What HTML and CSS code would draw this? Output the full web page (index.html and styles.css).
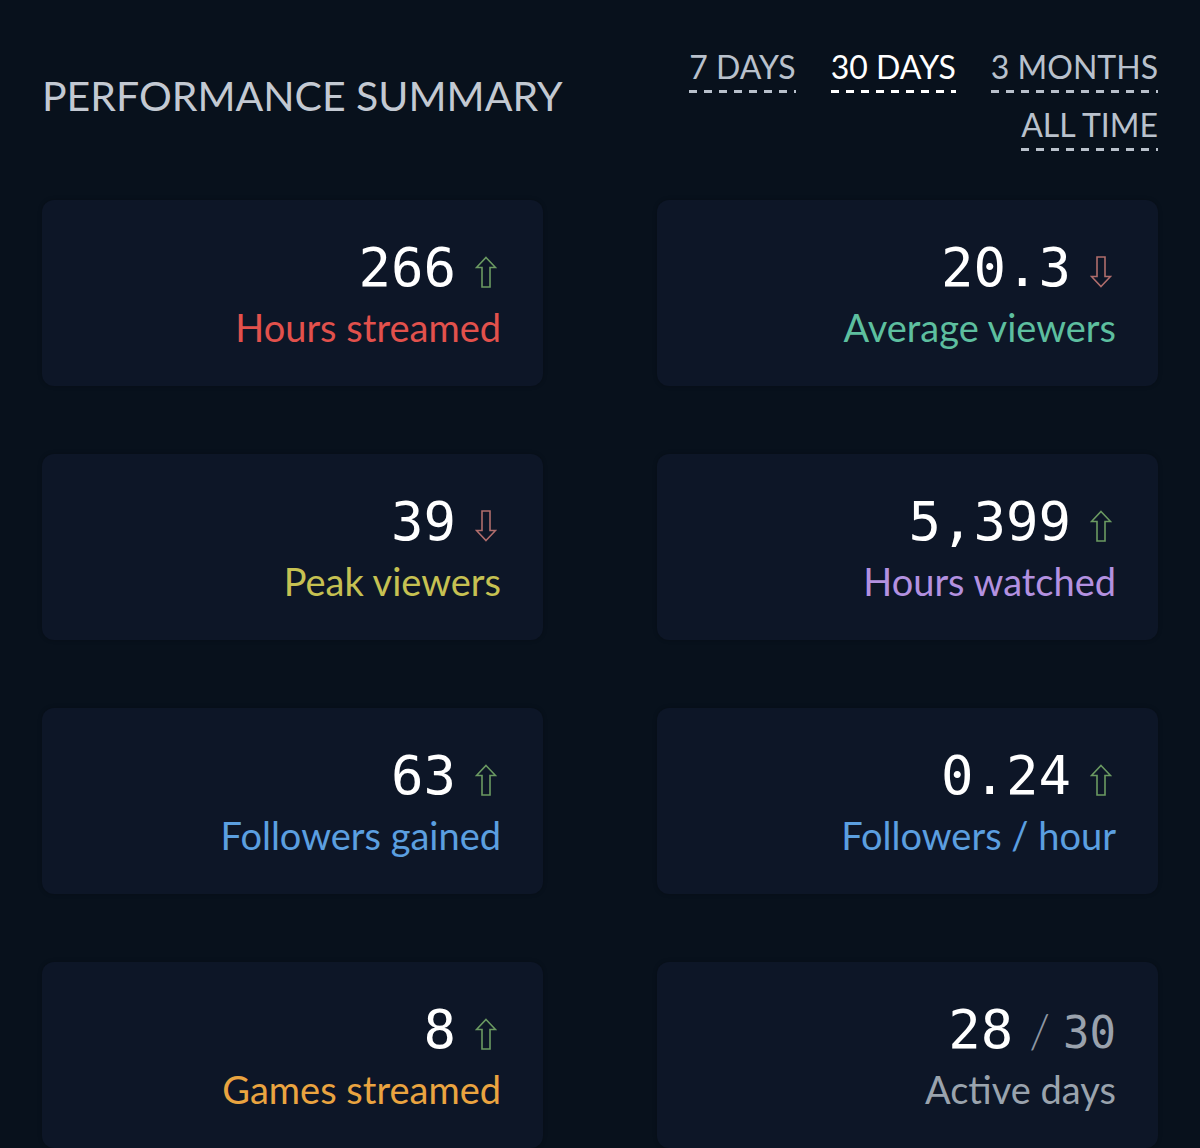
FILE: index.html
```html
<!DOCTYPE html>
<html lang="en">
<head>
<meta charset="utf-8">
<title>Performance Summary</title>
<link rel="stylesheet" href="styles.css">
</head>
<body>
<div class="page">
  <header class="header">
    <h1 class="title">PERFORMANCE SUMMARY</h1>
    <nav class="tabs">
      <span class="tab">7 DAYS</span>
      <span class="tab active">30 DAYS</span>
      <span class="tab">3 MONTHS</span>
      <span class="tab">ALL TIME</span>
    </nav>
  </header>

  <section class="grid">
    <div class="card">
      <div class="value"><span class="num">266</span><svg class="arrow up" viewBox="0 0 22 32"><path d="M11 1.5 L20.5 11.5 L15 11.5 L15 31 L7 31 L7 11.5 L1.5 11.5 Z"/></svg></div>
      <div class="label red">Hours streamed</div>
    </div>
    <div class="card">
      <div class="value"><span class="num">20.3</span><svg class="arrow down" viewBox="0 0 22 32"><path d="M11 30.5 L20.5 20.5 L15 20.5 L15 1 L7 1 L7 20.5 L1.5 20.5 Z"/></svg></div>
      <div class="label teal">Average viewers</div>
    </div>
    <div class="card">
      <div class="value"><span class="num">39</span><svg class="arrow down" viewBox="0 0 22 32"><path d="M11 30.5 L20.5 20.5 L15 20.5 L15 1 L7 1 L7 20.5 L1.5 20.5 Z"/></svg></div>
      <div class="label yellow">Peak viewers</div>
    </div>
    <div class="card">
      <div class="value"><span class="num">5,399</span><svg class="arrow up" viewBox="0 0 22 32"><path d="M11 1.5 L20.5 11.5 L15 11.5 L15 31 L7 31 L7 11.5 L1.5 11.5 Z"/></svg></div>
      <div class="label purple">Hours watched</div>
    </div>
    <div class="card">
      <div class="value"><span class="num">63</span><svg class="arrow up" viewBox="0 0 22 32"><path d="M11 1.5 L20.5 11.5 L15 11.5 L15 31 L7 31 L7 11.5 L1.5 11.5 Z"/></svg></div>
      <div class="label blue">Followers gained</div>
    </div>
    <div class="card">
      <div class="value"><span class="num">0.24</span><svg class="arrow up" viewBox="0 0 22 32"><path d="M11 1.5 L20.5 11.5 L15 11.5 L15 31 L7 31 L7 11.5 L1.5 11.5 Z"/></svg></div>
      <div class="label blue">Followers / hour</div>
    </div>
    <div class="card">
      <div class="value"><span class="num">8</span><svg class="arrow up" viewBox="0 0 22 32"><path d="M11 1.5 L20.5 11.5 L15 11.5 L15 31 L7 31 L7 11.5 L1.5 11.5 Z"/></svg></div>
      <div class="label orange">Games streamed</div>
    </div>
    <div class="card">
      <div class="value"><span class="num">28</span><span class="slash">/</span><span class="of">30</span></div>
      <div class="label gray">Active days</div>
    </div>
  </section>
</div>
</body>
</html>
```

FILE: styles.css
```css
html, body {
  margin: 0;
  padding: 0;
  background: #08111c;
}

body {
  font-family: Lato, "Open Sans", sans-serif;
  color: #c5cbd3;
}

.page {
  padding: 50px 42px 0 42px;
}

.header {
  display: flex;
  justify-content: space-between;
  align-items: flex-start;
}

.title {
  margin: 22px 0 0 0;
  font-size: 41px;
  line-height: 48px;
  font-weight: 400;
  color: #c3c9d2;
}

.tabs {
  display: flex;
  flex-wrap: wrap;
  justify-content: flex-end;
  column-gap: 35px;
  row-gap: 15px;
  width: 475px;
}

.tab {
  font-size: 32px;
  line-height: 34px;
  padding-bottom: 9px;
  color: #b9c1cc;
  background-image: repeating-linear-gradient(to right, currentColor 0 8px, transparent 8px 15px);
  background-size: 100% 3px;
  background-position: left bottom;
  background-repeat: no-repeat;
}

.tab.active {
  color: #ffffff;
}

.grid {
  margin-top: 49px;
  display: grid;
  grid-template-columns: 1fr 1fr;
  column-gap: 114px;
  row-gap: 68px;
}

.card {
  height: 186px;
  box-sizing: border-box;
  background: #0d1627;
  border-radius: 12px;
  padding: 38px 42px 0 0;
  display: flex;
  flex-direction: column;
  align-items: flex-end;
  box-shadow: 0 0 4px rgba(0, 0, 0, 0.25);
}

.value {
  display: flex;
  align-items: baseline;
  height: 60px;
  line-height: 60px;
}

.num {
  font-family: "DejaVu Sans Mono", "Liberation Mono", monospace;
  font-size: 54px;
  color: #ffffff;
}

.arrow {
  width: 22px;
  height: 32px;
  margin-left: 19px;
  margin-right: 4px;
  align-self: center;
  transform: translateY(4px);
}

.arrow path {
  fill: none;
  stroke-width: 1.6;
  stroke-linejoin: miter;
}

.arrow.up path {
  stroke: #6b9a62;
}

.arrow.down path {
  stroke: #b06d6c;
}

.slash {
  font-family: Lato, sans-serif;
  font-size: 48px;
  font-weight: 300;
  color: #8e97a3;
  margin: 0 13px 0 16px;
}

.of {
  font-family: "DejaVu Sans Mono", "Liberation Mono", monospace;
  font-size: 44px;
  color: #9aa2ad;
}

.label {
  margin-top: 7px;
  font-size: 38px;
  line-height: 44px;
}

.red { color: #e2514c; }
.teal { color: #5dbf9f; }
.yellow { color: #c6c152; }
.purple { color: #b391e0; }
.blue { color: #5b9fe0; }
.orange { color: #eaa440; }
.gray { color: #9aa3ad; }
```
